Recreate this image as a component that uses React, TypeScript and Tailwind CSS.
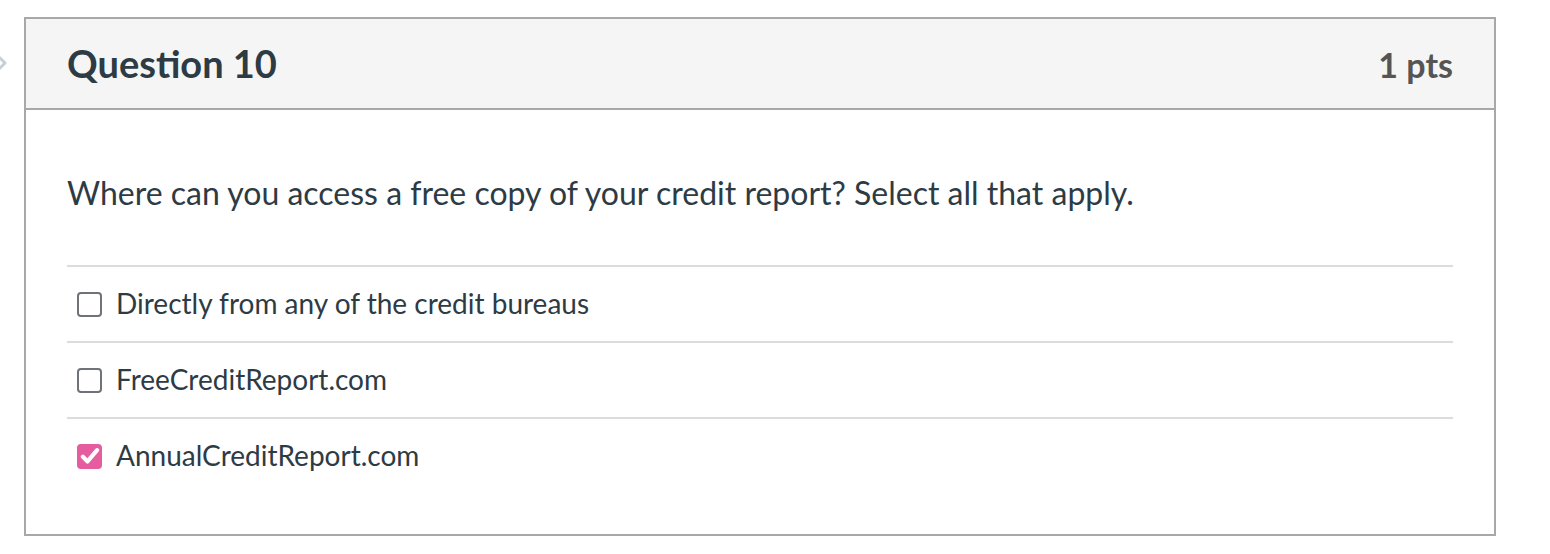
import React from "react";

const answers = [
  { text: "Directly from any of the credit bureaus", checked: false },
  { text: "FreeCreditReport.com", checked: false },
  { text: "AnnualCreditReport.com", checked: true },
];

function Checkbox({ checked }: { checked: boolean }) {
  if (checked) {
    return (
      <span className="flex h-[25px] w-[25px] shrink-0 items-center justify-center rounded-[4px] bg-[#e55d9f]">
        <svg width="20" height="20" viewBox="0 0 24 24" fill="none">
          <path d="M3.5 13l5.5 5.5L20.5 5" stroke="#fff" strokeWidth="5" strokeLinecap="round" strokeLinejoin="round" />
        </svg>
      </span>
    );
  }
  return <span className="h-[25px] w-[25px] shrink-0 rounded-[4px] border-2 border-[#6f7377] bg-white" />;
}

export default function App() {
  return (
    <div className="relative h-[554px] w-[1550px] overflow-hidden bg-white pl-[24px] pt-[17px] font-['Lato',sans-serif] text-[#2d3b45]">
      <svg className="absolute left-[-8px] top-[50px]" width="16" height="26" viewBox="0 0 16 26" fill="none">
        <path d="M3 3l10 10-10 10" stroke="#c3d0dc" strokeWidth="3" strokeLinejoin="round" />
      </svg>
      <div className="w-[1472px] border-2 border-[#a8a8a8]">
        <div className="flex h-[91px] items-center justify-between border-b-2 border-[#a8a8a8] bg-[#f5f5f5] px-[41px]">
          <h2 className="text-[38px] font-bold">Question 10</h2>
          <span className="pt-[2px] text-[34px] font-bold text-[#555]">1 pts</span>
        </div>
        <div className="px-[41px] pb-[41px] pt-[63px]">
          <p className="mb-[52px] text-[32px] leading-[40px]">
            Where can you access a free copy of your credit report? Select all that apply.
          </p>
          {answers.map((a, i) => (
            <div key={i} className="flex h-[76px] items-center gap-[14px] border-t-2 border-[#dcdcdc] pl-[10px]">
              <Checkbox checked={a.checked} />
              <span className="pb-[3px] text-[28px]">{a.text}</span>
            </div>
          ))}
        </div>
      </div>
    </div>
  );
}
